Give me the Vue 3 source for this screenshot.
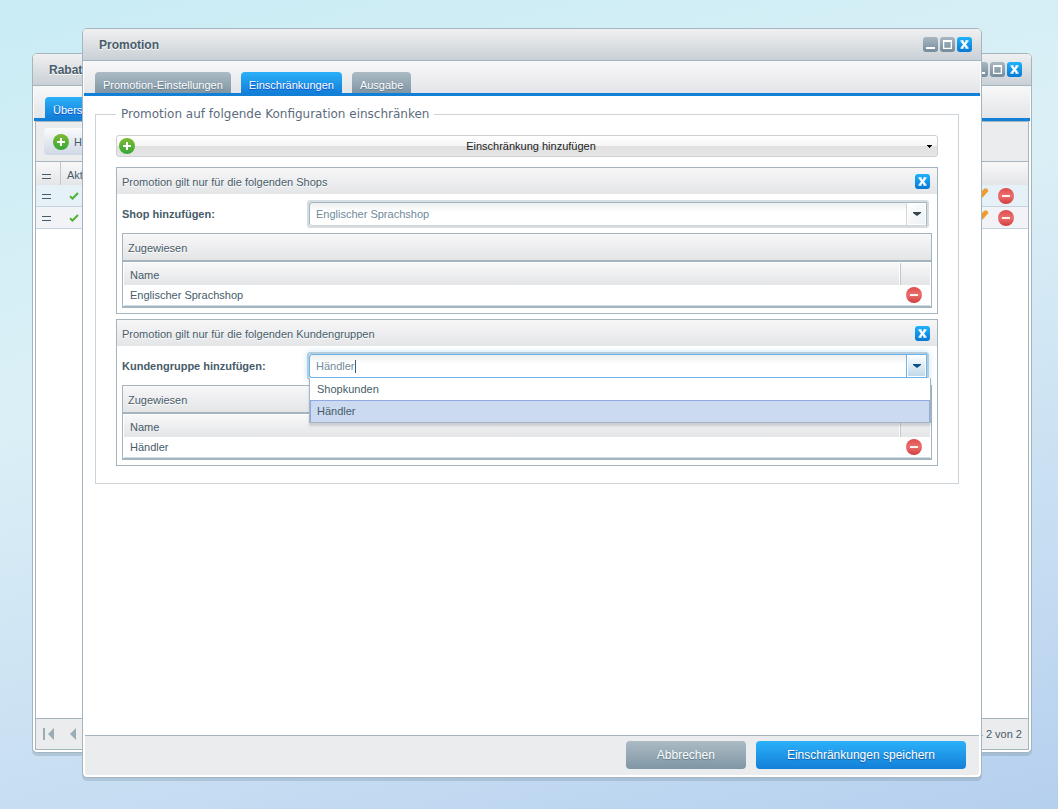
<script setup>
import { ref } from 'vue'

const tabs = ['Promotion-Einstellungen', 'Einschränkungen', 'Ausgabe']
const activeTab = ref('Einschränkungen')

const groups = ref([
  {
    id: 'shop',
    title: 'Promotion gilt nur für die folgenden Shops',
    label: 'Shop hinzufügen:',
    value: 'Englischer Sprachshop',
    rows: ['Englischer Sprachshop'],
    open: false,
    options: [],
  },
  {
    id: 'customer',
    title: 'Promotion gilt nur für die folgenden Kundengruppen',
    label: 'Kundengruppe hinzufügen:',
    value: 'Händler',
    rows: ['Händler'],
    open: true,
    options: ['Shopkunden', 'Händler'],
  },
])
</script>

<template>
  <div class="desktop">
    <section class="window window-back" aria-label="Rabatte">
      <header class="titlebar">
        <h2>Rabatte</h2>
        <div class="tools">
          <button class="tool" type="button" aria-label="Minimieren">
            <svg viewBox="0 0 15 15"><rect x="3" y="10" width="9" height="2" fill="#fff" /></svg>
          </button>
          <button class="tool" type="button" aria-label="Maximieren">
            <svg viewBox="0 0 15 15"><path fill="#fff" fill-rule="evenodd" d="M3 3h9v9H3zM4.300 5v5.700h6.400V5z" /></svg>
          </button>
          <button class="tool close" type="button" aria-label="Schließen">
            <svg viewBox="0 0 15 15"><path d="M5 4.500l5 6M10 4.500l-5 6" stroke="#fff" stroke-width="2.200" /><path d="M3.500 4h3M8.500 4h3M3.500 11h3M8.500 11h3" stroke="#fff" stroke-width="1.500" /></svg>
          </button>
        </div>
      </header>
      <nav class="tabbar"><button class="tab active" type="button">Übersicht</button></nav>
      <div class="overview">
        <div class="toolbar">
          <button class="add-button" type="button">
            <svg class="round" viewBox="0 0 16 16"><circle cx="8" cy="8" r="8" fill="url(#plus-fill)" /><path d="M8 4v8M4 8h8" stroke="#fff" stroke-width="2" /></svg>
            Hinzufügen
          </button>
        </div>
        <table class="promo-table">
          <thead>
            <tr>
              <th class="handle"><svg viewBox="0 0 9 6"><path d="M0 1.500h9M0 5.500h9" stroke="#475c6a" /></svg></th>
              <th>Aktiv</th>
              <th></th>
            </tr>
          </thead>
          <tbody>
            <tr v-for="n in 2" :key="n">
              <td class="handle"><svg viewBox="0 0 9 6"><path d="M0 .5h9M0 4.500h9" stroke="#475c6a" /></svg></td>
              <td class="check"><svg viewBox="0 0 10 8"><path d="M1 4.200l2.500 2.300L9 1" fill="none" stroke="#52b13c" stroke-width="2" /></svg></td>
              <td class="actions">
                <button class="icon-button" type="button" aria-label="Bearbeiten">
                  <svg class="round" viewBox="0 0 16 16"><path d="M1.500 10.500L11.500 .5h2.500l1.500 2.500-10 11L0 16z" fill="#ee9c2c" /></svg>
                </button>
                <button class="icon-button" type="button" aria-label="Löschen">
                  <svg class="round" viewBox="0 0 16 16"><circle cx="8" cy="8" r="8" fill="url(#minus-fill)" /><path d="M4 8h8" stroke="#fff0ee" stroke-width="2" /></svg>
                </button>
              </td>
            </tr>
          </tbody>
        </table>
        <footer class="paging">
          <button class="icon-button" type="button" aria-label="Erste Seite">
            <svg class="pager" viewBox="0 0 12 12"><path d="M0 0h2v12H0zM11 0v12L5 6z" fill="#9cacb6" /></svg>
          </button>
          <button class="icon-button" type="button" aria-label="Vorherige Seite">
            <svg class="pager" viewBox="0 0 12 12"><path d="M8 0v12L2 6z" fill="#9cacb6" /></svg>
          </button>
          <span class="count">1 - 2 von 2</span>
        </footer>
      </div>
    </section>

    <section class="window window-front" role="dialog" aria-label="Promotion">
      <header class="titlebar">
        <h2>Promotion</h2>
        <div class="tools">
          <button class="tool" type="button" aria-label="Minimieren">
            <svg viewBox="0 0 15 15"><rect x="3" y="10" width="9" height="2" fill="#fff" /></svg>
          </button>
          <button class="tool" type="button" aria-label="Maximieren">
            <svg viewBox="0 0 15 15"><path fill="#fff" fill-rule="evenodd" d="M3 3h9v9H3zM4.300 5v5.700h6.400V5z" /></svg>
          </button>
          <button class="tool close" type="button" aria-label="Schließen">
            <svg viewBox="0 0 15 15"><path d="M5 4.500l5 6M10 4.500l-5 6" stroke="#fff" stroke-width="2.200" /><path d="M3.500 4h3M8.500 4h3M3.500 11h3M8.500 11h3" stroke="#fff" stroke-width="1.500" /></svg>
          </button>
        </div>
      </header>
      <nav class="tabbar">
        <button
          v-for="tab in tabs"
          :key="tab"
          type="button"
          class="tab"
          :class="{ active: tab === activeTab }"
          @click="activeTab = tab"
        >{{ tab }}</button>
      </nav>

      <main class="content">
        <fieldset>
          <legend>Promotion auf folgende Konfiguration einschränken</legend>
          <button class="add-restriction" type="button">
            <svg class="round" viewBox="0 0 16 16">
              <defs>
                <linearGradient id="plus-fill" x2="0" y2="1"><stop stop-color="#7dba32" /><stop offset="1" stop-color="#36a837" /></linearGradient>
                <linearGradient id="minus-fill" x2="0" y2="1"><stop stop-color="#e04b4b" /><stop offset=".5" stop-color="#ea7070" /><stop offset="1" stop-color="#d33a3a" /></linearGradient>
              </defs>
              <circle cx="8" cy="8" r="8" fill="url(#plus-fill)" />
              <path d="M8 4v8M4 8h8" stroke="#fff" stroke-width="2" />
            </svg>
            <span>Einschränkung hinzufügen</span>
            <svg class="small-arrow" viewBox="0 0 5 3"><path d="M0 0h5v1H4v1H3v1H2V2H1V1H0z" /></svg>
          </button>

          <section v-for="group in groups" :key="group.id" class="panel">
            <header class="panel-head">
              <h3>{{ group.title }}</h3>
              <button class="tool close" type="button" aria-label="Entfernen">
                <svg viewBox="0 0 15 15"><path d="M5 4.500l5 6M10 4.500l-5 6" stroke="#fff" stroke-width="2.200" /><path d="M3.500 4h3M8.500 4h3M3.500 11h3M8.500 11h3" stroke="#fff" stroke-width="1.500" /></svg>
              </button>
            </header>
            <div class="panel-body">
              <div class="field">
                <label :for="group.id">{{ group.label }}</label>
                <div class="combo" :class="{ focused: group.open }">
                  <div class="combo-input">
                    <input :id="group.id" v-model="group.value" type="text" autocomplete="off" />
                    <span v-if="group.open" class="caret-line"><span class="measure">{{ group.value }}</span></span>
                  </div>
                  <button class="trigger" type="button" aria-label="Liste öffnen">
                    <svg viewBox="0 0 8 4"><path d="M0 0h8v1L4 4 0 1z" fill="currentColor" /></svg>
                  </button>
                  <ul v-if="group.open" class="options" role="listbox">
                    <li
                      v-for="option in group.options"
                      :key="option"
                      role="option"
                      :aria-selected="option === group.value"
                      :class="{ selected: option === group.value }"
                      @click="group.value = option"
                    >{{ option }}</li>
                  </ul>
                </div>
              </div>
              <div class="assigned">
                <h4>Zugewiesen</h4>
                <table>
                  <thead><tr><th>Name</th><th class="action"></th></tr></thead>
                  <tbody>
                    <tr v-for="row in group.rows" :key="row">
                      <td>{{ row }}</td>
                      <td class="action">
                        <button class="icon-button" type="button" aria-label="Löschen">
                          <svg class="round" viewBox="0 0 16 16"><circle cx="8" cy="8" r="8" fill="url(#minus-fill)" /><path d="M4 8h8" stroke="#fff0ee" stroke-width="2" /></svg>
                        </button>
                      </td>
                    </tr>
                  </tbody>
                </table>
              </div>
            </div>
          </section>
        </fieldset>
      </main>

      <footer class="actions-bar">
        <button class="action-button" type="button">Abbrechen</button>
        <button class="action-button primary" type="button">Einschränkungen speichern</button>
      </footer>
    </section>
  </div>
</template>

<style>
body {
  margin: 0;
}
</style>

<style scoped>
* {
  box-sizing: border-box;
}
.desktop {
  position: relative;
  min-height: 100vh;
  overflow: hidden;
  color: #475c6a;
  font: 11px/14px "Liberation Sans", Arial, sans-serif;
  background: linear-gradient(165deg, #c9ecf5 0%, #dbf0f6 38%, #c5dcf2 78%, #b5cfee 100%);
}
h2,
h3,
h4,
ul {
  margin: 0;
  padding: 0;
}
button {
  margin: 0;
  padding: 0;
  border: 0;
  background: none;
  color: inherit;
  font: inherit;
}
svg {
  display: block;
}

/* Windows */
.window {
  position: absolute;
  display: flex;
  flex-direction: column;
  border: 1px solid #a4b5c0;
  border-radius: 5px;
  background: #fff;
  box-shadow: 0 3px 0 rgba(120, 145, 165, 0.32);
}
.window-back {
  inset: 53px 26px 56px 32px;
}
.window-front {
  inset: 28px 76px 31px 82px;
}
.titlebar {
  display: flex;
  flex: none;
  align-items: center;
  justify-content: space-between;
  height: 32px;
  padding: 0 9px 0 16px;
  border-bottom: 1px solid #a4b5c0;
  border-radius: 4px 4px 0 0;
  background: linear-gradient(#f0f0f1, #c9d0d6);
}
.titlebar h2 {
  font-size: 12px;
  font-weight: bold;
  text-shadow: 0 1px 0 #fff;
}
.tools {
  display: flex;
  gap: 2px;
}
.tool {
  width: 15px;
  height: 15px;
  border-radius: 3px;
  background: linear-gradient(#a9b8c2, #758c9b);
}
.tool svg {
  width: 15px;
  height: 15px;
}
.tool.close {
  background: linear-gradient(#1fb2fb, #0878d4);
}
.tabbar {
  display: flex;
  flex: none;
  align-items: flex-end;
  gap: 10px;
  height: 35px;
  margin: 0 1px;
  padding-left: 11px;
  border-bottom: 3px solid #1380d8;
  background: linear-gradient(#f8f8f9, #e4e5e8);
}
.tab {
  height: 21px;
  padding: 4px 8px 0;
  overflow: hidden;
  border-radius: 4px 4px 0 0;
  background: linear-gradient(#acbbc4, #7f96a5);
  color: #fff;
  line-height: 16px;
  text-shadow: 0 1px 1px #5f7686;
}
.tab.active {
  background: linear-gradient(#2bb0f9, #1380d8);
  text-shadow: 0 1px 1px #0a45d0;
}

/* Overview window */
.overview {
  display: flex;
  flex: 1;
  flex-direction: column;
  margin: 0 2px 2px;
  border: 1px solid #a4b5c0;
}
.toolbar {
  height: 40px;
  padding: 6px 8px;
  border-bottom: 1px solid #a4b5c0;
  background: #ebecee;
}
.add-button {
  display: flex;
  align-items: center;
  gap: 5px;
  height: 27px;
  padding: 0 9px;
  border-radius: 4px;
  background: linear-gradient(#fbfbfc, #ced8e5);
}
.round {
  width: 16px;
  height: 16px;
}
.promo-table {
  width: 100%;
  border-spacing: 0;
}
.promo-table th {
  height: 23px;
  padding: 3px 6px 0;
  background: linear-gradient(#f8f8f9, #e4e5e7);
  font-weight: normal;
  text-align: left;
}
.promo-table td {
  height: 22px;
  padding: 0 8px;
  border-bottom: 1px solid #c5d3df;
  background: #f2f3f6;
}
.promo-table tbody tr:first-child td {
  background: #e5f0f7;
}
.promo-table .handle {
  width: 25px;
  padding: 2px 0 0 6px;
}
.promo-table th.handle {
  padding-top: 4px;
  border-right: 1px solid #c1c8cd;
}
.handle svg {
  width: 9px;
  height: 6px;
}
.check svg {
  width: 10px;
  height: 8px;
}
.promo-table td.actions {
  padding: 0 14px;
  line-height: 0;
  text-align: right;
}
.actions .icon-button + .icon-button {
  margin-left: 9px;
}
.icon-button {
  display: inline-block;
  vertical-align: middle;
}
.paging {
  display: flex;
  align-items: center;
  gap: 13px;
  height: 31px;
  margin-top: auto;
  padding: 0 6px 0 7px;
  border-top: 1px solid #a4b5c0;
  background: #ebecee;
}
.pager {
  width: 12px;
  height: 12px;
}
.count {
  margin-left: auto;
}

/* Promotion window */
.content {
  flex: 1;
  padding: 9px 22px 0 12px;
}
fieldset {
  min-width: 0;
  margin: 0;
  padding: 12px 20px 17px;
  border: 1px solid #ccd3d9;
}
legend {
  padding: 0 5px;
  color: #5d6c7c;
  font: 12px/18px "DejaVu Sans", Verdana, sans-serif;
}
.add-restriction {
  display: flex;
  align-items: center;
  width: 100%;
  height: 22px;
  margin-bottom: 10px;
  padding: 0 5px 0 2px;
  border: 1px solid #d0d0d0;
  border-radius: 3px;
  background: linear-gradient(#fff, #f6f6f6 48%, #e0e0e0 50%, #e5e5e5);
  color: #222;
}
.add-restriction span {
  flex: 1;
  text-align: center;
}
.small-arrow {
  width: 5px;
  height: 3px;
  fill: #000;
}
.panel {
  border: 1px solid #a4b5c0;
}
.panel + .panel {
  margin-top: 5px;
}
.panel-head {
  display: flex;
  align-items: center;
  justify-content: space-between;
  height: 27px;
  padding: 0 7px 0 5px;
  border-bottom: 1px solid #fff;
  background: linear-gradient(#f7f7f8, #e4e5e7);
}
.panel-head h3,
.assigned h4 {
  font-size: 11px;
  font-weight: normal;
  text-shadow: 0 1px 0 #fff;
}
.panel-head h3 {
  padding-top: 2px;
}
.panel-body {
  padding: 5px;
}
.field {
  display: flex;
  align-items: center;
  margin-right: 3px;
}
.field label {
  flex: none;
  width: 185px;
  font-weight: bold;
}
.combo {
  position: relative;
  display: flex;
  flex: 1;
  height: 28px;
  border: 2px solid #d5dce2;
  border-radius: 3px;
}
.combo-input {
  position: relative;
  flex: 1;
}
.combo input {
  display: block;
  width: 100%;
  height: 24px;
  padding: 0 6px;
  border: 1px solid #a4b5c0;
  border-right: 0;
  border-bottom-color: #d0d7dc;
  border-radius: 3px 0 0 3px;
  outline: 0;
  background: linear-gradient(#eceff0, #fff 9px);
  color: #6f8a9b;
  font: inherit;
}
.trigger {
  display: grid;
  place-items: center;
  width: 21px;
  height: 24px;
  border: 1px solid #d0d7dc;
  border-top-color: #a4b5c0;
  border-right-color: #a4b5c0;
  background: linear-gradient(135deg, #fff, #ecf0f2);
  box-shadow: inset 0 0 0 1px #fff;
  color: #35464f;
}
.trigger svg {
  width: 8px;
  height: 4px;
}
.combo.focused {
  border-color: #b4cddd;
  box-shadow: 0 0 6px #c5e4f8;
}
.focused input,
.focused .trigger {
  border-color: #6eb3ea;
}
.focused .trigger {
  background: linear-gradient(#fff, #bed7e9);
  color: #07518d;
}
/* Text cursor placed after the typed value */
.caret-line {
  position: absolute;
  top: 6px;
  left: 7px;
  height: 13px;
  border-right: 1px solid #475c6a;
  pointer-events: none;
}
.measure {
  visibility: hidden;
}
.options {
  position: absolute;
  z-index: 2;
  top: 24px;
  right: -4px;
  left: 0;
  border: 1px solid #a4b5c0;
  border-top: 0;
  background: #fff;
  box-shadow: 0 3px 2px rgba(120, 130, 140, 0.3);
  list-style: none;
}
.options li {
  height: 22px;
  padding: 0 6px;
  border: 1px solid transparent;
  line-height: 20px;
}
.options .selected {
  border-color: #8eaadf;
  border-bottom: 0;
  background: #cbdaf0;
}
.assigned {
  margin-top: 5px;
  border: 1px solid #a4b5c0;
  border-bottom-width: 2px;
}
.assigned h4 {
  height: 28px;
  padding: 1px 5px 0;
  border-bottom: 2px solid #a4b5c0;
  background: linear-gradient(#f7f7f8, #e4e5e7);
  line-height: 26px;
}
.assigned table {
  width: 100%;
  border: 1px solid #fff;
  border-bottom: 0;
  border-spacing: 0;
}
.assigned th {
  height: 22px;
  padding: 2px 6px 0;
  background: linear-gradient(#f8f8f9, #e4e5e7);
  font-weight: normal;
  text-align: left;
}
.assigned th.action {
  border-left: 1px solid #c1c8cd;
  box-shadow: -1px 0 0 #fff;
}
.assigned td {
  height: 21px;
  padding: 0 6px;
  border-bottom: 1px solid #d3dbe2;
}
.assigned .action {
  width: 30px;
  padding: 0 6px;
}
.actions-bar {
  display: flex;
  justify-content: flex-end;
  gap: 10px;
  margin: 0 2px 2px;
  padding: 5px 13px 6px;
  border-top: 1px solid #a4b5c0;
  border-radius: 0 0 3px 3px;
  background: #ebecee;
}
.action-button {
  height: 28px;
  padding: 0 31px;
  border-radius: 4px;
  background: linear-gradient(#acbbc4, #7f96a5);
  color: #fff;
  font-size: 12px;
  text-shadow: 0 1px 1px #5f7686;
}
.action-button.primary {
  background: linear-gradient(#2bb0f9, #1380d8);
  text-shadow: 0 1px 1px #17589a;
}
</style>
